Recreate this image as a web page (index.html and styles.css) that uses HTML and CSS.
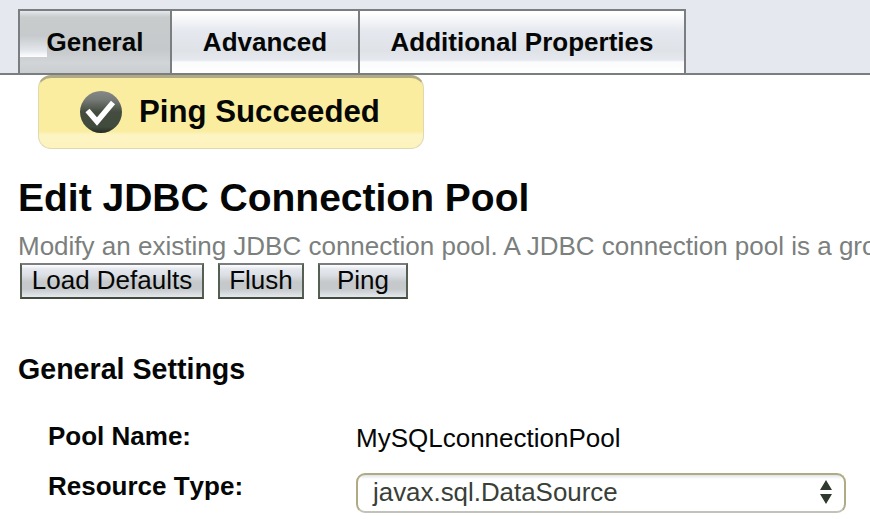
FILE: index.html
```
<!DOCTYPE html>
<html lang="en">
<head>
<meta charset="utf-8">
<title>Edit JDBC Connection Pool</title>
<link rel="stylesheet" href="styles.css">
</head>
<body>
<nav class="tabs">
  <a class="tab tab-general active">General</a>
  <a class="tab tab-advanced">Advanced</a>
  <a class="tab tab-properties">Additional Properties</a>
</nav>
<main>
  <div class="alert">
    <svg class="alert-icon" width="44" height="44" viewBox="0 0 44 44">
      <defs>
        <linearGradient id="disc" x1="0" y1="0" x2="0" y2="1">
          <stop offset="0" stop-color="#858886"/>
          <stop offset=".2" stop-color="#777b78"/>
          <stop offset=".5" stop-color="#434c3f"/>
          <stop offset=".85" stop-color="#414b3d"/>
          <stop offset="1" stop-color="#242b22"/>
        </linearGradient>
      </defs>
      <circle cx="22" cy="22" r="21" fill="url(#disc)"/>
      <path d="M8.5 20.5 18 31.5 34 12.5" fill="none" stroke="#fff" stroke-width="5.4"/>
    </svg>
    <span>Ping Succeeded</span>
  </div>
  <h1>Edit JDBC Connection Pool</h1>
  <p class="intro">Modify an existing JDBC connection pool. A JDBC connection pool is a group</p>
  <div class="actions">
    <button class="load">Load Defaults</button>
    <button class="flush">Flush</button>
    <button class="ping">Ping</button>
  </div>
  <h2>General Settings</h2>
  <div class="row">
    <span class="label">Pool Name:</span>
    <span class="value">MySQLconnectionPool</span>
  </div>
  <div class="row">
    <span class="label">Resource Type:</span>
    <div class="select">
      <span>javax.sql.DataSource</span>
      <svg width="12" height="24" viewBox="0 0 12 24"><path d="M6 0 12 10H0ZM0 14H12L6 24Z" fill="#2f3a2f"/></svg>
    </div>
  </div>
</main>
</body>
</html>
```
FILE: styles.css
```
* { box-sizing: border-box; }
body {
  margin: 0;
  width: 870px;
  height: 520px;
  overflow: hidden;
  background: #fff;
  color: #050706;
  font: 26px/30px "Liberation Sans", Arial, sans-serif;
}
.tabs {
  display: flex;
  height: 75px;
  padding: 9px 0 0 18px;
  background: #e5e8ee;
  border-bottom: 2px solid #7b7e80;
}
.tab {
  border: 2px solid #7b7e80;
  border-left: 0;
  border-bottom: 0;
  line-height: 62px;
  text-align: center;
  font-weight: bold;
  background: linear-gradient(#fff 2px, #e5e8ee 20px, #dfe2e7 40px, #e5e8ee 49px, #fafbfc 51px, #fff 62px);
}
.tab-general { width: 154px; border-left: 2px solid #7b7e80; }
.tab-advanced { width: 188px; }
.tab-properties { width: 326px; }
.tab.active {
  background:
    linear-gradient(#c5c9cb, #e3e6eb 70%, #fff) 0 24px / 27px 22px no-repeat,
    linear-gradient(#e5e8ee, #c8cccd 6px, #c5c9cb 38px, #d2d5d8 52px, #cacecf 62px);
}
.alert {
  display: flex;
  align-items: center;
  gap: 16px;
  width: 386px;
  height: 74px;
  margin-left: 38px;
  padding: 0 0 2px 40px;
  border: 1px solid #e0d9b0;
  border-top: 3px solid #b1ab85;
  border-radius: 13px;
  background: linear-gradient(#fbed9f 53px, #fdf4c4 57px, #fdf3bd 70px);
  font-size: 31.2px;
  font-weight: bold;
}
.alert-icon { flex: none; }
h1 {
  margin: 27px 0 0 18px;
  font-size: 39px;
  line-height: 44px;
}
.intro {
  margin: 9px 0 0 18px;
  line-height: 34px;
  color: #7b7f7d;
  white-space: nowrap;
}
.actions { display: flex; margin-left: 20px; }
button {
  height: 36px;
  margin: 0;
  padding: 0 0 2px;
  border: 2px solid #556052;
  border-top-color: #7b7e80;
  border-bottom-color: #414b3d;
  background: linear-gradient(#fff, #e5e8ee 4px, #dcdfe4 10px, #c5c9cb 17px, #c5c9cb 24px, #e5e8ee 32px);
  color: inherit;
  font: inherit;
}
.load { width: 184px; }
.flush { width: 86px; margin-left: 14px; }
.ping { width: 90px; margin-left: 14px; }
h2 {
  margin: 54px 0 32px 18px;
  font-size: 28.6px;
  line-height: 32px;
}
.row { display: flex; height: 50px; padding-left: 48px; line-height: 38px; }
.label { width: 308px; font-weight: bold; font-kerning: none; }
.value { padding-top: 2px; }
.select {
  display: flex;
  align-items: center;
  justify-content: space-between;
  width: 490px;
  height: 40px;
  margin-top: 6px;
  padding: 0 12px 2px 15px;
  border: 2px solid #b1ab85;
  border-bottom-color: #c2c3b8;
  border-radius: 9px;
  background: linear-gradient(#dfe3e9, #fff 4px);
  color: #384037;
  font-size: 25.9px;
}
```
